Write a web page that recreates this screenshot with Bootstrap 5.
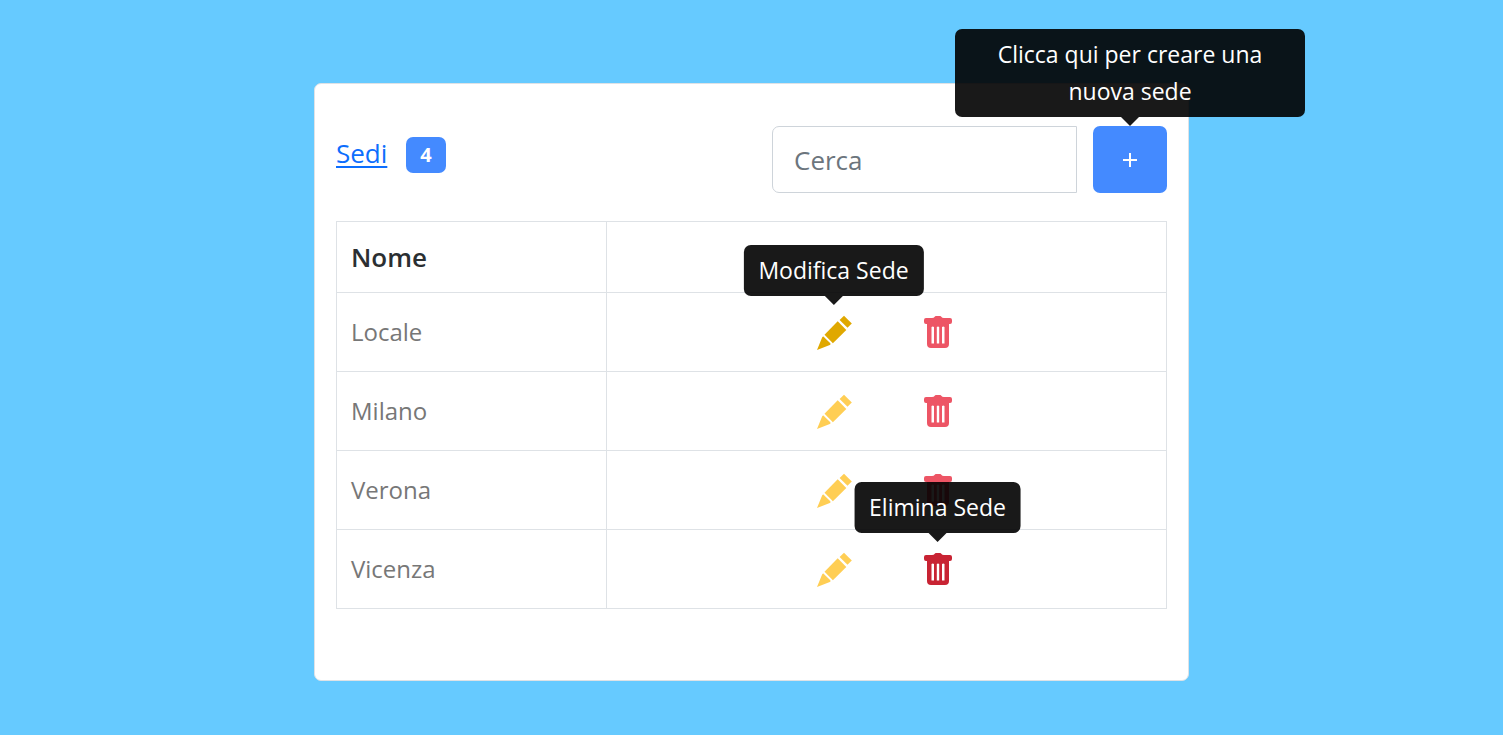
<!DOCTYPE html>
<html lang="it">
<head>
<meta charset="utf-8">
<meta name="viewport" content="width=device-width, initial-scale=1">
<title>Sedi</title>
<link href="https://cdn.jsdelivr.net/npm/bootstrap@5.3.0/dist/css/bootstrap.min.css" rel="stylesheet">
<style>
  body { background: #66caff; font-family: "Segoe UI", "Open Sans", sans-serif; font-size: 24px; }
  .sedi-wrap { max-width: 875px; margin-top: 83px; }
  .sedi-card { border: 1px solid #dee2e6; border-radius: 7px; padding: 42px 21px 71px; }
  .sedi-head { margin-bottom: 28px; }
  .sedi-title { gap: 19px; padding-top: 11px; }
  .sedi-title a { font-size: 26px; line-height: 32px; color: #0d6efd; text-underline-offset: 3px; }
  .sedi-count { background: #448aff; font-size: 20px; line-height: 20px; padding: 8px 14px; border-radius: 7px; }
  .sedi-tools { gap: 16px; }
  .sedi-search { width: 305px; height: 67px; font-size: 26px; padding: 7px 21px 6px; border-color: #ced4da; border-radius: 7px 0 0 7px; }
  .sedi-search::placeholder { color: #6c757d; }
  .sedi-add { width: 74px; height: 67px; background: #448aff; border-radius: 7px; }
  .sedi-add:hover { background: #2f7bf5; }
  .sedi-table { border-color: #dee2e6; }
  .sedi-table th, .sedi-table td { padding: 12px 14px; vertical-align: middle; color: #777; }
  .sedi-table td:last-child { padding-right: 16px; }
  .sedi-table th { height: 71px; font-size: 26px; font-weight: 600; color: #2b2f32; }
  .sedi-name { width: 270px; }
  .sedi-icon { width: 104px; height: 54px; }
  .sedi-icon svg { width: 36px; height: 36px; fill: currentColor; }
  .edit { color: #ffce54; }
  .edit.is-hover { color: #e0a800; }
  .erase { color: #ed5565; }
  .erase.is-hover { color: #c82333; }
  .tip { position: absolute; bottom: 100%; left: 50%; transform: translateX(-50%); z-index: 5; margin-bottom: 9px;
         width: max-content; max-width: 350px; padding: 7px 15px; border-radius: 7px; background: rgba(0,0,0,.9);
         color: #fff; font-size: 23px; line-height: 37px; text-align: center; }
  .tip::after { content: ""; position: absolute; top: 100%; left: 50%; margin-left: -9px; border: 9px solid transparent; border-bottom: 0; border-top-color: rgba(0,0,0,.9); }
</style>
</head>
<body>
<svg class="d-none" aria-hidden="true">
  <symbol id="pencil" viewBox="0 -1 36 36">
    <path d="M1 35 6.200 22.300Q7.200 20.800 8.400 22.400L14.300 28.200Q15.200 29.300 13.800 29.900Z"/>
    <path d="M8.500 19.700 21.700 6.300 30.300 15 16.900 28.300Z"/>
    <path d="M23.600 5 28 .7 35.800 8.400 31.500 12.800Z"/>
  </symbol>
  <symbol id="trash" viewBox="0 -1 36 36">
    <path fill-rule="evenodd" d="M4 5Q4 3 6 3H12Q14 3 14.500 2T16 1H20Q21 1 21.500 2T24 3H30Q32 3 32 5V7Q32 9 30 9H29V29Q29 33 25 33H11Q7 33 7 29V9H6Q4 9 4 7ZM11.500 12V28.500H14V12Q12.750 11 11.500 12ZM16.800 12V28.500H19.200V12Q18 11 16.800 12ZM22 12V28.500H24.500V12Q23.250 11 22 12Z"/>
  </symbol>
</svg>
<main class="sedi-wrap mx-auto">
  <section class="card sedi-card">
    <header class="sedi-head d-flex justify-content-between align-items-start">
      <div class="sedi-title d-flex align-items-start">
        <a href="#">Sedi</a>
        <span class="badge sedi-count">4</span>
      </div>
      <div class="sedi-tools d-flex">
        <input type="search" class="form-control sedi-search" placeholder="Cerca" aria-label="Cerca">
        <div class="position-relative">
          <button type="button" class="btn sedi-add p-0 d-flex align-items-center justify-content-center" aria-label="Nuova sede" aria-describedby="tip-add">
            <svg width="16" height="16" viewBox="0 0 16 16" stroke="#fff" stroke-width="2"><path d="M1 8H15M8 1V15"/></svg>
          </button>
          <div class="tip" role="tooltip" id="tip-add">Clicca qui per creare una nuova sede</div>
        </div>
      </div>
    </header>
    <table class="table table-bordered sedi-table mb-0">
      <thead>
        <tr><th scope="col" class="sedi-name">Nome</th><th></th></tr>
      </thead>
      <tbody>
        <tr><td>Locale</td><td><div class="d-flex justify-content-center">
          <div class="position-relative"><button type="button" class="btn sedi-icon edit is-hover border-0 p-0" aria-label="Modifica Locale"><svg><use href="#pencil"/></svg></button><div class="tip" role="tooltip">Modifica Sede</div></div>
          <button type="button" class="btn sedi-icon erase border-0 p-0" aria-label="Elimina Locale"><svg><use href="#trash"/></svg></button>
        </div></td></tr>
        <tr><td>Milano</td><td><div class="d-flex justify-content-center">
          <button type="button" class="btn sedi-icon edit border-0 p-0" aria-label="Modifica Milano"><svg><use href="#pencil"/></svg></button>
          <button type="button" class="btn sedi-icon erase border-0 p-0" aria-label="Elimina Milano"><svg><use href="#trash"/></svg></button>
        </div></td></tr>
        <tr><td>Verona</td><td><div class="d-flex justify-content-center">
          <button type="button" class="btn sedi-icon edit border-0 p-0" aria-label="Modifica Verona"><svg><use href="#pencil"/></svg></button>
          <button type="button" class="btn sedi-icon erase border-0 p-0" aria-label="Elimina Verona"><svg><use href="#trash"/></svg></button>
        </div></td></tr>
        <tr><td>Vicenza</td><td><div class="d-flex justify-content-center">
          <button type="button" class="btn sedi-icon edit border-0 p-0" aria-label="Modifica Vicenza"><svg><use href="#pencil"/></svg></button>
          <div class="position-relative"><button type="button" class="btn sedi-icon erase is-hover border-0 p-0" aria-label="Elimina Vicenza"><svg><use href="#trash"/></svg></button><div class="tip" role="tooltip">Elimina Sede</div></div>
        </div></td></tr>
      </tbody>
    </table>
  </section>
</main>
<script src="https://cdn.jsdelivr.net/npm/bootstrap@5.3.0/dist/js/bootstrap.bundle.min.js"></script>
</body>
</html>
